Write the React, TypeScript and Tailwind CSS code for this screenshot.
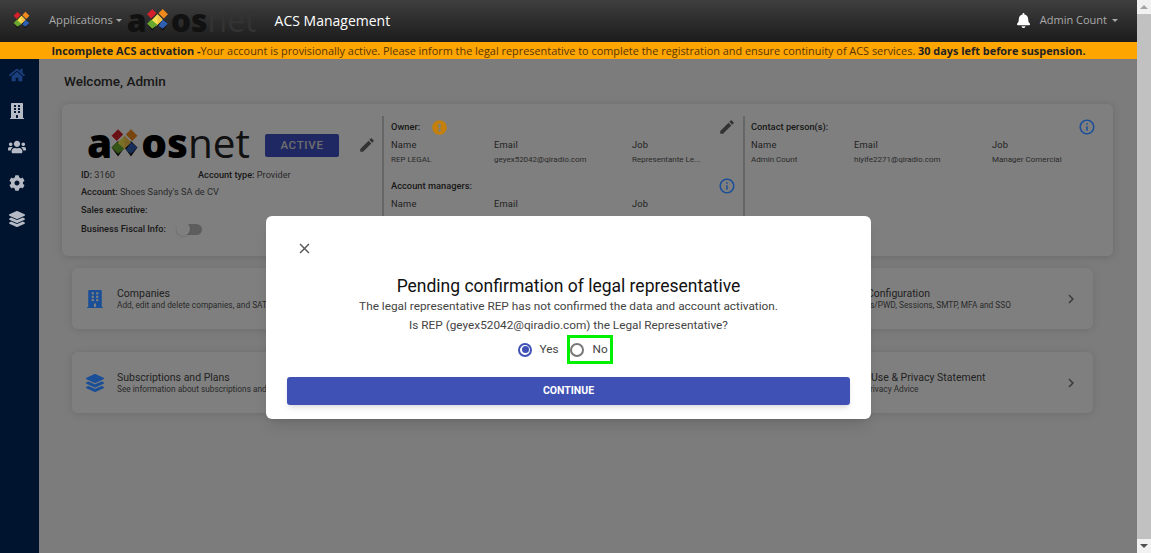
import React from "react";
import { FaBell, FaBuilding, FaCog, FaExclamationCircle, FaHome, FaLayerGroup, FaUsers } from "react-icons/fa";
import { MdChevronRight, MdClose, MdEdit, MdInfoOutline } from "react-icons/md";

const Mark = ({ s = 24 }: { s?: number }) => (
  <svg width={s} height={s} viewBox="0 0 24 24" className="shrink-0">
    <path d="M12 15l5 7 5-7-5-5z" fill="#111" />
    <path d="M12 15l-5 7-5-7 5-5z" fill="#111" />
    <path d="M7 1L2 6l4 4 5-5z" fill="#d3202a" />
    <path d="M17 1l5 5-4 4-5-5z" fill="#f08a1d" />
    <path d="M12 6l-6 6 5 5 6-6z" fill="#f4e04d" />
    <path d="M6 11l-4 4 5 5 5-4z" fill="#6aa82f" />
    <path d="M17 11l5 4-5 5-4-3z" fill="#2f5fb3" />
    <path d="M12 6l5 5-5 5z" fill="#f3c14a" />
  </svg>
);

const Logo = ({ cls, net, mark, gap }: { cls: string; net: string; mark: number; gap: string }) => (
  <div className={`flex items-center font-['Open_Sans',sans-serif] ${cls}`}>
    <span className="font-extrabold">a</span>
    <span className={`flex ${gap}`}><Mark s={mark} /></span>
    <span className="font-extrabold">os</span>
    <span className={`font-normal ${net}`}>net</span>
  </div>
);

const Head = () => (
  <div className="grid grid-cols-[103px_138px_1fr] text-[9.3px] leading-[12px] tracking-[0.02em] text-[#444]">
    <span>Name</span>
    <span>Email</span>
    <span>Job</span>
  </div>
);

const Vals = ({ a, b, c }: { a: string; b: string; c: string }) => (
  <div className="mt-[3px] grid grid-cols-[103px_138px_1fr] text-[8px] leading-[12px] text-[#555]">
    <span>{a}</span>
    <span>{b}</span>
    <span>{c}</span>
  </div>
);

const Row = ({
  icon,
  title,
  sub,
  rightTitle,
  rightSub,
  titleCls,
  subCls,
}: {
  icon: React.ReactNode;
  title: string;
  sub: string;
  rightTitle: string;
  rightSub: string;
  titleCls: string;
  subCls: string;
}) => (
  <div className="flex h-[61px] items-center rounded-md bg-white pl-[14px] pr-[15px] shadow-[0_1px_8px_rgba(0,0,0,0.12)]">
    <div className="relative z-20 w-[31px] text-[#1a4f98]">{icon}</div>
    <div className="flex-1 pt-[1px]">
      <div className="text-[10.5px] leading-[12px] text-[#444]">{title}</div>
      <div className="text-[8.3px] leading-[10px] text-[#555]">{sub}</div>
    </div>
    <div className="w-[197px] pt-[1px]">
      <div className={`text-[10.5px] leading-[12px] text-[#444] ${titleCls}`}>{rightTitle}</div>
      <div className={`text-[8.3px] leading-[10px] text-[#555] ${subCls}`}>{rightSub}</div>
    </div>
    <MdChevronRight size={18} className="-mx-[2px] text-[#777]" />
  </div>
);

export default function App() {
  return (
    <div className="flex h-[553px] w-[1151px] overflow-hidden bg-[#f1f1f1] font-['Roboto',sans-serif]">
      <div className="relative flex w-[1137px] flex-col">
        <header className="relative z-20 flex h-[42px] items-center bg-gradient-to-b from-[#3f3f3f] to-[#1c1c1c] pb-[2px] pl-[12px] pr-[19px]">
          <Mark s={19} />
          <span className="ml-[18px] font-['Open_Sans',sans-serif] text-[11.2px] text-[#aaa]">Applications</span>
          <span className="ml-[3px] h-0 w-0 border-x-[3px] border-t-[3px] border-x-transparent border-t-[#aaa]" />
          <Logo cls="ml-[5px] text-[32px] leading-[38px] text-[#111]" net="text-[#333]" mark={25} gap="-ml-[2px] mr-[1px]" />
          <span className="ml-[18px] font-['Open_Sans',sans-serif] text-[14px] text-white">ACS Management</span>
          <FaBell size={15} className="ml-auto text-white" />
          <span className="ml-[9px] font-['Open_Sans',sans-serif] text-[11px] text-[#aaa]">Admin Count</span>
          <span className="ml-[5px] h-0 w-0 border-x-[3px] border-t-[3px] border-x-transparent border-t-[#aaa]" />
        </header>
        <div className="relative z-20 flex h-[17px] items-center justify-center bg-[#ffa500] pt-[1px] font-['Open_Sans',sans-serif] text-[10.9px] text-[#5a3500]">
          <b className="text-[#222]">Incomplete ACS activation -</b>
          <span>Your account is provisionally active. Please inform the legal representative to complete the registration and ensure continuity of ACS services.&nbsp;</span>
          <b className="text-[#222]">30 days left before suspension.</b>
        </div>
        <div className="flex flex-1">
          <aside className="relative z-20 flex w-[39px] flex-col items-center gap-[20px] bg-[#00142f] pr-[5px] pt-[8px] text-[#b5bac5]">
            <FaHome size={16} className="text-[#1a3f7c]" />
            <FaBuilding size={16} />
            <FaUsers size={18} className="-my-[1px]" />
            <FaCog size={16} />
            <FaLayerGroup size={16} />
          </aside>
          <main className="flex-1 bg-[#f8f8f8] pl-[23px] pr-[24px] text-[#333]">
            <h1 className="ml-[2px] mt-[14px] text-[13.5px] font-medium leading-[16px]">Welcome, Admin</h1>
            <section className="mt-[15px] flex h-[152px] rounded-md bg-white py-[12px] shadow-[0_1px_8px_rgba(0,0,0,0.15)]">
              <div className="w-[320px] pl-[19px] text-[9.2px] text-[#555]">
                <div className="mt-[4px] flex h-[46px] items-center pl-[6px]">
                  <Logo cls="w-[171px] text-[40.5px] leading-[46px] text-black" net="text-[#222]" mark={31} gap="-ml-[3px] mr-[1px]" />
                  <div className="ml-[7px] mt-[5px] flex h-[23px] w-[74px] items-center justify-center rounded-[2px] bg-[#3f51c5] text-[11.5px] font-medium tracking-[0.06em] text-[#ddd]">ACTIVE</div>
                  <MdEdit size={18} className="ml-[19px] mt-[3px] text-[#666]" />
                </div>
                <div className="mt-[3px] flex leading-[12px]"><span className="w-[117px]"><b className="font-medium text-[#333]">ID:</b> 3160</span><span><b className="font-medium text-[#333]">Account type:</b> Provider</span></div>
                <div className="mt-[5px] leading-[12px]"><b className="font-medium text-[#333]">Account:</b> Shoes Sandy's SA de CV</div>
                <div className="mt-[6px] font-medium leading-[12px] text-[#333]">Sales executive:</div>
                <div className="mt-[6px] flex h-[14px] items-center font-medium text-[#333]">
                  Business Fiscal Info:
                  <span className="relative ml-[10px] h-[11px] w-[26px] rounded-full bg-[#bbb]">
                    <span className="absolute left-0 -top-[2px] h-[14px] w-[14px] rounded-full bg-white shadow" />
                  </span>
                </div>
              </div>
              <div className="w-[361px] border-l-2 border-[#ccc] pl-[7px] pr-[7px]">
                <div className="mt-[4px] flex h-[14px] items-center text-[9.3px] font-medium">Owner:<FaExclamationCircle size={15} className="relative z-20 ml-[12px] text-[#c4800a]" /><MdEdit size={18} className="ml-auto text-[#666]" /></div>
                <div className="mt-[5px]"><Head /></div>
                <Vals a="REP LEGAL" b="geyex52042@qiradio.com" c="Representante Le..." />
                <div className="mt-[12px] flex h-[16px] items-center text-[9.3px] font-medium">Account managers:<MdInfoOutline size={18} className="relative z-20 ml-auto text-[#1a4f98]" /></div>
                <div className="mt-[4px]"><Head /></div>
              </div>
              <div className="flex-1 border-l-2 border-[#ccc] pl-[6px] pr-[17px]">
                <div className="mt-[4px] flex h-[14px] items-center text-[9.3px] font-medium">Contact person(s):<MdInfoOutline size={18} className="relative z-20 ml-auto text-[#1a4f98]" /></div>
                <div className="mt-[5px]"><Head /></div>
                <Vals a="Admin Count" b="hiyife2271@qiradio.com" c="Manager Comercial" />
              </div>
            </section>
            <div className="mt-[12px] flex flex-col gap-[23px] pl-[10px] pr-[20px]">
              <Row icon={<FaBuilding size={18} />} title="Companies" sub="Add, edit and delete companies, and SAT" rightTitle="Configuration" rightSub="s/PWD, Sessions, SMTP, MFA and SSO" titleCls="" subCls="ml-[3px]" />
              <Row icon={<FaLayerGroup size={18} />} title="Subscriptions and Plans" sub="See information about subscriptions and" rightTitle="Use & Privacy Statement" rightSub="rivacy Advice" titleCls="ml-[4px]" subCls="ml-[3px]" />
            </div>
          </main>
        </div>
        <div className="absolute inset-x-0 bottom-0 top-[59px] z-10 bg-black/50" />
        <div className="absolute left-[266px] top-[216px] z-30 flex h-[203px] w-[605px] flex-col items-center rounded-md bg-white px-[21px] pt-[24px] shadow-lg">
          <MdClose size={17} className="ml-[9px] self-start text-[#555]" />
          <h2 className="mt-[18px] text-[17.5px] leading-[22px] text-[#111]">Pending confirmation of legal representative</h2>
          <p className="mt-[1px] text-[11.8px] leading-[16px] text-[#444]">The legal representative REP has not confirmed the data and account activation.</p>
          <p className="mt-[3px] text-[11.8px] leading-[16px] text-[#444]">Is REP (geyex52042@qiradio.com) the Legal Representative?</p>
          <div className="mr-[6px] mt-[2px] flex h-[29px] items-center text-[11.8px] text-[#444]">
            <span className="flex h-[14px] w-[14px] items-center justify-center rounded-full border-2 border-[#3f51b5]"><span className="h-[7px] w-[7px] rounded-full bg-[#3f51b5]" /></span>
            <span className="ml-[7px]">Yes</span>
            <div className="ml-[8px] flex h-[29px] w-[46px] items-center border-[3px] border-[#00f000]">
              <span className="h-[14px] w-[14px] rounded-full border-2 border-[#777]" />
              <span className="ml-[9px]">No</span>
            </div>
          </div>
          <button className="mt-[13px] h-[28px] w-full rounded-[3px] bg-[#3f51b5] text-[10.5px] font-bold text-white shadow-md">CONTINUE</button>
        </div>
      </div>
      <div className="flex w-[14px] flex-col items-center bg-[#f1f1f1]">
        <span className="mt-[5px] h-0 w-0 border-x-[4px] border-b-[4px] border-x-transparent border-b-[#a3a3a3]" />
        <div className="mt-[5px] w-full flex-1 bg-[#c1c1c1]" />
        <span className="mb-[5px] mt-[5px] h-0 w-0 border-x-[4px] border-t-[4px] border-x-transparent border-t-[#505050]" />
      </div>
    </div>
  );
}
